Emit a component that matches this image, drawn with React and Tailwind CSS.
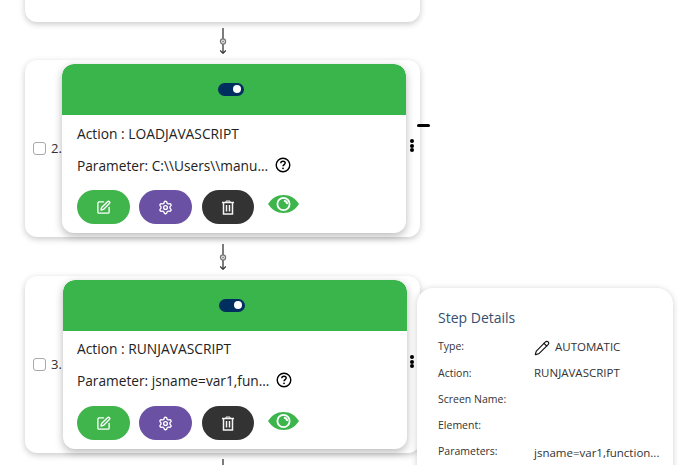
import React from "react";
import { SquarePen, Settings, Pencil } from "lucide-react";

const font = { fontFamily: '"Open Sans", sans-serif' };

function Eye() {
  return (
    <svg width="31" height="18" viewBox="0 0 31 18" className="block">
      <path d="M0 9C4 3 9 0 15.500 0S27 3 31 9C27 15 22 18 15.500 18S4 15 0 9Z" fill="#3cb54c" />
      <circle cx="15.500" cy="9" r="7" fill="#fff" />
      <circle cx="15.500" cy="9" r="5.200" fill="#3cb54c" />
      <path d="M16 4.800A4.300 4.300 0 0 1 20 9.200L18 8.800A2.400 2.400 0 0 0 15.800 6.600Z" fill="#fff" />
    </svg>
  );
}

function Bin() {
  return (
    <svg width="14" height="15" viewBox="0 0 14 15" fill="none" stroke="#f4f4f4" strokeWidth="1.500">
      <path d="M1 2.500H13" />
      <path d="M5 2.500V1H9V2.500" strokeWidth="1" />
      <path d="M2.500 2.500V14H11.500V2.500" />
      <path d="M5.500 5V11.500M8.500 5V11.500" />
    </svg>
  );
}

function Help() {
  return (
    <svg width="16" height="16" viewBox="0 0 16 16" fill="none" className="shrink-0">
      <circle cx="8" cy="8" r="6.800" stroke="#000" strokeWidth="1.400" />
      <path d="M5.800 6.200C5.800 4.900 6.800 4.200 8 4.200S10.200 5 10.200 6.100C10.200 7.500 8 7.700 8 9.300" stroke="#000" strokeWidth="1.400" />
      <circle cx="8" cy="11.300" r="0.900" fill="#000" />
    </svg>
  );
}

function Connector() {
  return (
    <div className="flex justify-center h-[26px] w-[395px]">
      <svg width="12" height="26" viewBox="0 0 12 26">
        <path d="M6 0V25" stroke="#6e6e6e" strokeWidth="1.800" fill="none" />
        <circle cx="6" cy="13.500" r="2.600" fill="#ddd" stroke="#777" strokeWidth="1.200" />
        <circle cx="6" cy="13.500" r="0.800" fill="#777" />
        <path d="M3.200 22.500L6 25.300L8.800 22.500" stroke="#333" strokeWidth="1.200" fill="none" />
      </svg>
    </div>
  );
}

function Pill({ className, children }) {
  return <div className={`h-[34px] rounded-full flex items-center justify-center text-white ${className}`}>{children}</div>;
}

function StepCard({ n, action, param, innerLeft, textLeft, textTop, btnGap, eyeTop }) {
  return (
    <div className="relative w-[395px] h-[177px] bg-white rounded-xl shadow-[0_2px_6px_rgba(0,0,0,0.22)] flex items-center shrink-0">
      <div className="ml-2 w-[13px] h-[13px] border border-[#a9a9a9] rounded-[3px] bg-white shrink-0" />
      <span className="ml-[5px] text-[13px] text-[#333] w-[11px] overflow-hidden whitespace-nowrap shrink-0">{n}.</span>
      <div className={`${innerLeft} w-[344px] h-[169px] bg-white rounded-xl shadow-[0_3px_8px_rgba(0,0,0,0.28)] flex flex-col shrink-0 overflow-hidden`}>
        <div className="h-[51px] bg-[#3ab54b] rounded-t-xl flex items-center justify-center shrink-0">
          <div className="w-[26px] h-[13px] rounded-full bg-[#002e5f] flex items-center justify-end pr-[3px] -ml-[6px] -mt-[1px]">
            <div className="w-[8px] h-[8px] rounded-full bg-white" />
          </div>
        </div>
        <div className={`${textLeft} ${textTop} flex flex-col`}>
          <div className="text-[13.800px] leading-[20px] text-[#222]">Action : {action}</div>
          <div className="mt-[12px] flex items-center h-[20px]">
            <span className="text-[13.700px] leading-[20px] text-[#222]">Parameter: {param}</span>
            <span className="ml-[7px] -mt-[3px]"><Help /></span>
          </div>
          <div className={`${btnGap} flex items-start`}>
            <Pill className="w-[53px] bg-[#3fb54c]"><SquarePen size={15} strokeWidth={2.200} /></Pill>
            <Pill className="w-[53px] ml-[9px] bg-[#6a51a3]"><Settings size={15} strokeWidth={2.200} /></Pill>
            <Pill className="w-[52px] ml-[10px] bg-[#333333]"><Bin /></Pill>
            <div className={`ml-[14px] ${eyeTop}`}><Eye /></div>
          </div>
        </div>
      </div>
      <div className="absolute left-[385px] top-[79px] flex flex-col gap-[0.500px]">
        <span className="w-[4px] h-[4px] rounded-full bg-black" />
        <span className="w-[4px] h-[4px] rounded-full bg-black" />
        <span className="w-[4px] h-[4px] rounded-full bg-black" />
      </div>
    </div>
  );
}

function DetailRow({ label, children }) {
  return (
    <div className="flex items-center h-[26.250px] text-[11.500px] text-[#333]">
      <span className="w-[96px] text-[10.500px] text-[#333] shrink-0">{label}</span>
      {children}
    </div>
  );
}

export default function App() {
  return (
    <div className="relative w-[687px] h-[465px] overflow-hidden bg-white" style={font}>
      <div className="flex flex-col pl-[25px] -mt-[38px]">
        <div className="w-[395px] h-[60px] bg-white rounded-xl shadow-[0_2px_6px_rgba(0,0,0,0.22)] shrink-0" />
        <div className="mt-[6px]"><Connector /></div>
        <div className="mt-[6px]"><StepCard n="2" action="LOADJAVASCRIPT" param={"C:\\\\Users\\\\manu..."} innerLeft="ml-0" textLeft="pl-[15px]" textTop="pt-[9px]" btnGap="mt-[14px]" eyeTop="mt-[5px]" /></div>
        <div className="mt-[7px]"><Connector /></div>
        <div className="mt-[6px]"><StepCard n="3" action="RUNJAVASCRIPT" param="jsname=var1,fun..." innerLeft="ml-[1px]" textLeft="pl-[14px]" textTop="pt-[8px]" btnGap="mt-[15px]" eyeTop="mt-[6px]" /></div>
        <div className="mt-[6px]"><Connector /></div>
      </div>

      <div className="absolute left-[417px] top-[124px] w-[13px] h-[3px] bg-black rounded-full" />

      <div className="absolute left-[417px] top-[288px] w-[256px] h-[200px] bg-white rounded-2xl shadow-[0_1px_6px_rgba(0,0,0,0.2)] pl-[21px] pt-[20px]">
        <div className="text-[14px] leading-[20px] text-[#34506f]">Step Details</div>
        <div className="mt-[6px]">
          <DetailRow label="Type:">
            <Pencil size={16} strokeWidth={1.700} className="text-[#111] shrink-0 mt-[2px]" />
            <span className="ml-[5px] -mt-[2px]">AUTOMATIC</span>
          </DetailRow>
          <DetailRow label="Action:"><span className="-mt-[1px]">RUNJAVASCRIPT</span></DetailRow>
          <DetailRow label="Screen Name:" />
          <DetailRow label="Element:" />
          <DetailRow label="Parameters:"><span>jsname=var1,function...</span></DetailRow>
        </div>
      </div>
    </div>
  );
}
